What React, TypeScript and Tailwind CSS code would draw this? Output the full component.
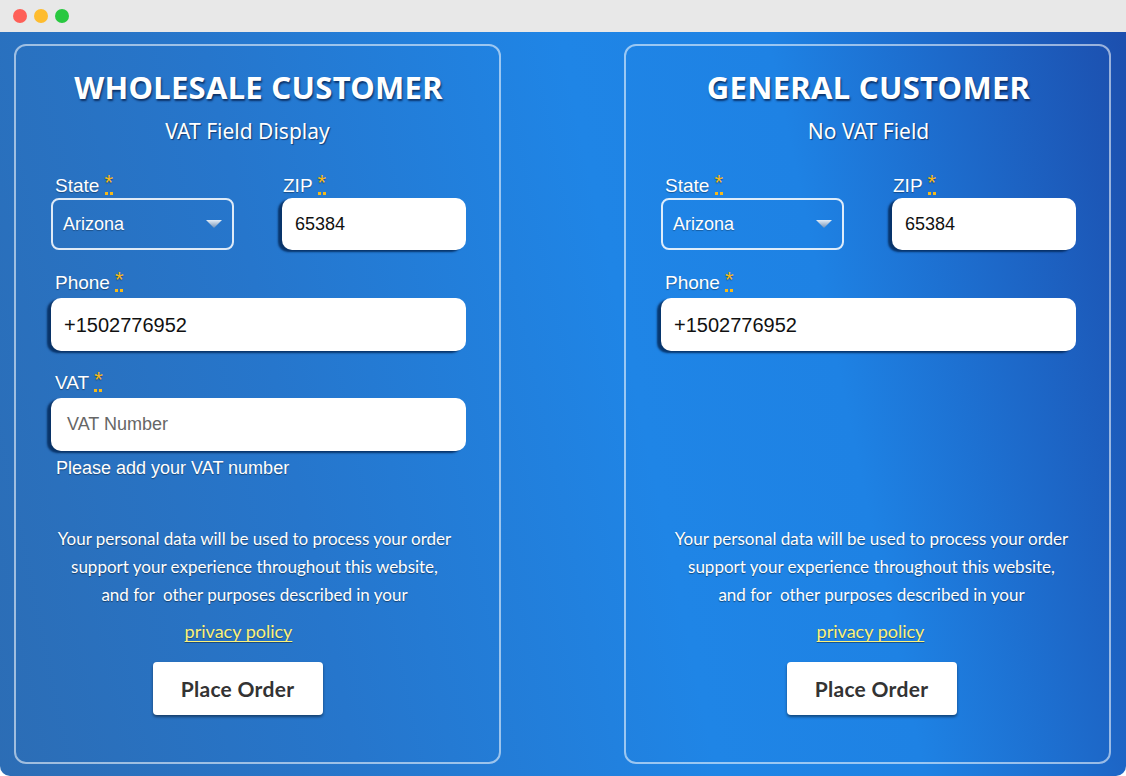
import React from "react";

const arial = { fontFamily: '"Liberation Sans", Arial, sans-serif' };

function Star() {
  return (
    <span className="ml-[5px] inline-flex flex-col items-center align-top">
      <span className="text-[22px] leading-[17px] text-[#f6b918]">*</span>
      <span className="mt-[1px] flex gap-[2px]">
        <span className="w-[3px] h-[3px] bg-[#f6b918]" />
        <span className="w-[3px] h-[3px] bg-[#f6b918]" />
      </span>
    </span>
  );
}

function Label({ text, className = "" }: { text: string; className?: string }) {
  return (
    <div
      className={`h-[24px] text-[19px] leading-[24px] text-white [text-shadow:0_1px_1px_rgba(0,0,0,0.35)] ${className}`}
      style={arial}
    >
      {text}
      <Star />
    </div>
  );
}

function TextBox({ value, placeholder, size = "text-[20px]", h = "h-[53px]" }: { value?: string; placeholder?: string; size?: string; h?: string }) {
  return (
    <div
      className={`${h} rounded-[10px] bg-white flex items-center shadow-[-4px_2px_2px_rgba(4,40,88,0.85)] ${placeholder ? "pl-[16px]" : "pl-[13px]"}`}
      style={arial}
    >
      {value ? (
        <span className={`${size} text-[#111]`}>{value}</span>
      ) : (
        <span className="text-[18px] text-[#666]">{placeholder}</span>
      )}
    </div>
  );
}

function Panel({ title, subtitle, vat }: { title: string; subtitle: string; vat: boolean }) {
  return (
    <div className="w-[487px] h-[720px] rounded-[12px] border-2 border-white/55 pl-[35px] pr-[33px] pt-[21px]">
      <h1
        className="text-center text-[31px] leading-[40px] font-bold text-white tracking-[0.3px] [text-shadow:1px_2px_2px_rgba(0,20,60,0.7)]"
        style={{ fontFamily: '"Noto Sans", Lato, sans-serif' }}
      >
        {title}
      </h1>
      <div
        className={`mt-[10px] text-center text-[21px] leading-[28px] text-white [text-shadow:1px_1px_1px_rgba(0,20,60,0.6)] ${vat ? "pr-[22px]" : ""}`}
        style={{ fontFamily: '"Noto Sans", Lato, sans-serif' }}
      >
        {subtitle}
      </div>

      <div className="mt-[29px] grid grid-cols-[183px_184px] gap-x-[48px]">
        <Label text="State" className="pl-[4px]" />
        <Label text="ZIP" className="pl-[1px]" />
        <div
          className="h-[52px] rounded-[8px] border-2 border-white/85 flex items-center justify-between pl-[10px] pr-[9px]"
          style={arial}
        >
          <span className="text-[18px] text-white [text-shadow:0_1px_1px_rgba(0,0,0,0.3)]">Arizona</span>
          <svg width="18" height="10" viewBox="0 0 18 10">
            <defs>
              <linearGradient id={`tri-${vat ? "a" : "b"}`} x1="0" y1="0" x2="0" y2="1">
                <stop offset="0" stopColor="#e6eef7" />
                <stop offset="1" stopColor="#6f8fb5" />
              </linearGradient>
            </defs>
            <polygon points="1,1 17,1 9,9" fill={`url(#tri-${vat ? "a" : "b"})`} />
          </svg>
        </div>
        <TextBox value="65384" size="text-[18px]" h="h-[52px]" />
      </div>

      <Label text="Phone" className="mt-[21px] pl-[4px]" />
      <div className="mt-[3px]">
        <TextBox value="+1502776952" />
      </div>

      {vat ? (
        <>
          <Label text="VAT" className="mt-[20px] pl-[4px]" />
          <div className="mt-[3px]">
            <TextBox placeholder="VAT Number" />
          </div>
          <div
            className="mt-[6px] pl-[5px] text-[18px] leading-[22px] text-white [text-shadow:0_1px_1px_rgba(0,0,0,0.4)]"
            style={arial}
          >
            Please add your VAT number
          </div>
        </>
      ) : (
        <div className="h-[128px]" />
      )}

      <div
        className={`mt-[46px] text-center text-[17px] leading-[28px] text-white [text-shadow:0_1px_1px_rgba(0,0,0,0.45)] ${vat ? "pr-[8px]" : "pl-[6px]"}`}
        style={{ fontFamily: 'Lato, "Open Sans", sans-serif' }}
      >
        <p>Your personal data will be used to process your order</p>
        <p>support your experience throughout this website,</p>
        <p>and for&nbsp; other purposes described in your</p>
      </div>
      <div
        className={`mt-[10px] text-center text-[18px] leading-[24px] ${vat ? "pr-[40px]" : "pl-[4px]"}`}
        style={{ fontFamily: 'Lato, "Open Sans", sans-serif' }}
      >
        <a href="#" className="text-[#fcf27a] underline underline-offset-[3px] decoration-[1px] [text-shadow:0_1px_1px_rgba(0,0,0,0.35)]">
          privacy policy
        </a>
      </div>

      <div className={`mt-[19px] flex justify-center ${vat ? "pr-[42px]" : "pl-[6px]"}`}>
        <button
          className="w-[170px] h-[53px] rounded-[4px] bg-white text-[21px] font-bold text-[#333] tracking-[0.3px] shadow-[0_2px_3px_rgba(0,0,0,0.45)]"
          style={{ fontFamily: 'Lato, "Noto Sans", sans-serif' }}
        >
          Place Order
        </button>
      </div>
    </div>
  );
}

export default function App() {
  return (
    <div className="w-[1126px] h-[776px] bg-white overflow-hidden">
      <div className="h-[32px] bg-[#e8e8e8] flex items-center gap-[7px] pl-[13px]">
        <span className="w-[14px] h-[14px] rounded-full bg-[#fe5f57]" />
        <span className="w-[14px] h-[14px] rounded-full bg-[#febc2e]" />
        <span className="w-[14px] h-[14px] rounded-full bg-[#28c840]" />
      </div>
      <div className="h-[744px] rounded-b-[10px] bg-[linear-gradient(78deg,#2c6db5_0%,#2676cc_28%,#1f85e6_56%,#1e82e4_72%,#1c4fae_100%)] flex justify-between pl-[14px] pr-[15px] pt-[12px]">
        <Panel title="WHOLESALE CUSTOMER" subtitle="VAT Field Display" vat />
        <Panel title="GENERAL CUSTOMER" subtitle="No VAT Field" vat={false} />
      </div>
    </div>
  );
}
